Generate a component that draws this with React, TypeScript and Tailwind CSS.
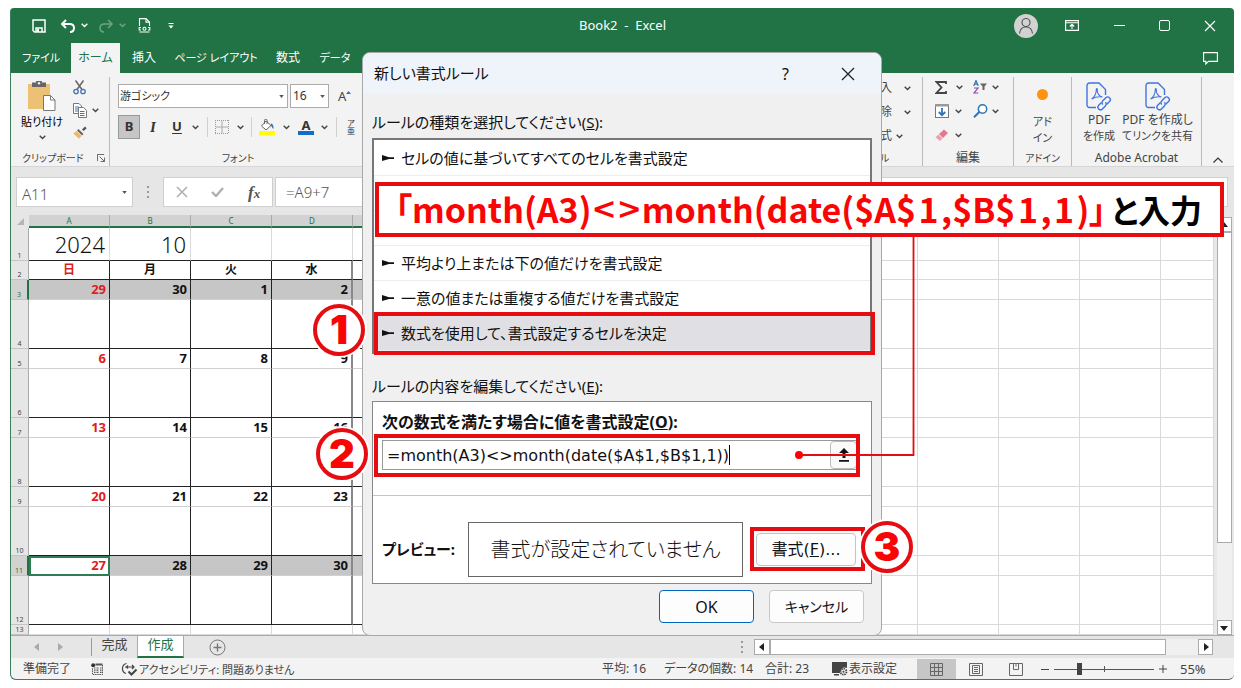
import React from "react";

const Chevron = ({ className = "text-[#444]" }: { className?: string }) => (
  <svg viewBox="0 0 7 5" className={`h-[5px] w-[7px] shrink-0 ${className}`} fill="none" stroke="currentColor" strokeWidth="1.4">
    <path d="M0.7 0.8 L3.5 3.6 L6.3 0.8" />
  </svg>
);

const Caret = ({ className = "" }: { className?: string }) => (
  <svg viewBox="0 0 6 4" className={`pointer-events-none h-[3px] w-[5px] ${className}`} fill="#555">
    <path d="M0 0h6L3 4z" />
  </svg>
);

const SaveIcon = () => (
  <svg viewBox="0 0 14 14" className="h-[14px] w-[14px]" fill="none" stroke="#fff" strokeWidth="1.5">
    <path d="M1 1h12v12H2.5L1 11.5z" />
    <path d="M4 13V9h6v4" />
    <path d="M5 10h2v3H5z" fill="#fff" stroke="none" />
  </svg>
);

const UndoIcon = ({ flip = false }: { flip?: boolean }) => (
  <svg viewBox="0 0 16 14" className={flip ? "h-[14px] w-4 -scale-x-100 opacity-35" : "h-[14px] w-4"} fill="none" stroke="#fff" strokeWidth={flip ? 1.5 : 2}>
    <path d="M6 1 L2 5 L6 9" />
    <path d="M2 5h7.5c2.6 0 4.5 1.6 4.5 4s-1.5 4-4 4" />
  </svg>
);

const PrintPreviewIcon = () => (
  <svg viewBox="0 0 13 15" className="h-[15px] w-[13px]" fill="none" stroke="#fff" strokeWidth="1.1">
    <path d="M1.5 8V0.600h6.500l3.500 3.500V8" />
    <path d="M8 0.600v3.500h3.500" />
    <path d="M3 9.500H1.200v2.500H3M10 9.500h1.800v2.500H10M1.500 14h10" />
    <circle cx="6.5" cy="10.700" r="1.500" />
  </svg>
);

const PasteIcon = () => (
  <svg viewBox="0 0 28 30" className="h-[30px] w-7">
    <rect x="0" y="3" width="22" height="25" fill="#edc175" />
    <path d="M4 1.5h4a3 3 0 0 1 6 0h4V6H4z" fill="#666" />
    <circle cx="11" cy="2.3" r="1.2" fill="#eee" />
    <path d="M15.5 14.5h7l4.5 4.5v10.5H15.5z" fill="#fff" stroke="#777" />
    <path d="M22.5 14.5V19H27" fill="none" stroke="#777" />
  </svg>
);

const CutIcon = () => (
  <svg viewBox="0 0 13 15" className="h-[15px] w-[13px]" fill="none" strokeWidth="1.3">
    <path d="M2.5 0.5 L9 9.5 M10.5 0.5 L4 9.5" stroke="#666" strokeWidth="1.5" />
    <circle cx="3" cy="11.5" r="2.2" stroke="#3b76b5" />
    <circle cx="10" cy="11.5" r="2.2" stroke="#3b76b5" />
  </svg>
);

const CopyIcon = () => (
  <svg viewBox="0 0 14 15" className="h-[15px] w-[14px]" fill="#fff" stroke="#777">
    <path d="M0.5 0.5h5.5l2.5 2.5v7.500h-8z" />
    <path d="M2 4h4M2 6h4M2 8h3" stroke="#3b76b5" />
    <path d="M5.500 4.500h5l3 3v7h-8z" />
    <path d="M7 8.500h4.500M7 10.500h4.500M7 12.500h4.500" stroke="#3b76b5" />
  </svg>
);

const BrushIcon = () => (
  <svg viewBox="0 0 14 13" className="h-[13px] w-[14px]">
    <path d="M9 3.500 L12 0.500 L13.700 2.200 L10.600 5z" fill="#555" />
    <path d="M5.500 3 L10.500 8 L9 9.500 L4 4.500z" fill="#666" />
    <path d="M3.500 5 L8.500 10 L6 12.700 L0.300 7.500z" fill="#edb866" />
  </svg>
);

const BordersIcon = () => (
  <svg viewBox="0 0 14 14" className="h-[14px] w-[14px]" fill="none" stroke="#999">
    <path d="M0.500 0v14M13.500 0v14M0 0.500h14M0 13.500h14" strokeDasharray="1 1" />
    <path d="M7 1v12M1 7h12" stroke="#aaa" />
  </svg>
);

const FillIcon = () => (
  <svg viewBox="0 0 16 17" className="h-[17px] w-4">
    <rect y="12" width="16" height="4.500" fill="#ffff00" />
    <path d="M7 2 L12 6.500 L7 11 L2.500 7z" fill="#fff" stroke="#666" />
    <path d="M5.500 5V1.500a1.300 1.300 0 0 1 2.600 0V5" fill="none" stroke="#666" />
    <path d="M12 4.500c2 .5 2.800 2 2.500 5.500-1-.5-1.500-2-2.500-3z" fill="#3b76b5" />
  </svg>
);

const AvatarIcon = () => (
  <svg viewBox="0 0 24 24" className="h-6 w-6">
    <circle cx="12" cy="12" r="12" fill="#d2d2d2" />
    <g fill="none" stroke="#555" strokeWidth="1.200">
      <circle cx="12" cy="8.500" r="4" />
      <path d="M5.500 19.500c.5-4.500 3-6.500 6.500-6.500s6 2 6.500 6.500" />
    </g>
  </svg>
);

const RibbonDisplayIcon = () => (
  <svg viewBox="0 0 14 11" className="h-[11px] w-[14px]" fill="none" stroke="#fff" strokeWidth="1.100">
    <path d="M0.600 0.600h12.800v9.800H0.600z M0.600 2.700h12.800" />
    <path d="M7 9V4.500M4.800 6.500 L7 4.300 L9.200 6.500" />
  </svg>
);

const CommentIcon = () => (
  <svg viewBox="0 0 15 13" className="h-[13px] w-[15px]" fill="none" stroke="#fff" strokeWidth="1.100">
    <path d="M0.600 0.600h13.800v8.800H5.500L2.800 12V9.400H0.600z" />
  </svg>
);

const SigmaIcon = () => (
  <svg viewBox="0 0 12 13" className="h-[13px] w-3" fill="none" stroke="#444" strokeWidth="1.800">
    <path d="M11 3V1H1.500L6.500 6.500L1.500 12H11V10" />
  </svg>
);

const FillDownIcon = () => (
  <svg viewBox="0 0 14 14" className="h-[14px] w-[14px]">
    <rect x="0.500" y="0.500" width="13" height="13" fill="#fff" stroke="#777" />
    <rect x="0" y="0" width="14" height="2.500" fill="#999" />
    <path d="M7 4v7M3.800 8 L7 11.200 L10.200 8" fill="none" stroke="#2e75b6" strokeWidth="1.800" />
  </svg>
);

const EraserIcon = () => (
  <svg viewBox="0 0 14 12" className="h-3 w-[14px]">
    <path d="M9 0.500 L13 4 L8 9 L4 5z" fill="#e4788f" />
    <path d="M3.500 5.500 L7.500 9.500 L5 12 L0.500 8.300z" fill="#ee9fb0" />
  </svg>
);

const SortIcon = () => (
  <svg viewBox="0 0 14 14" className="h-[14px] w-[14px]" fill="none">
    <path d="M0.700 6 L3 0.500 L5.300 6M1.500 4.200h3" stroke="#2e75b6" strokeWidth="1.200" />
    <path d="M1 8h4L1 13h4.300" stroke="#8e44ad" strokeWidth="1.200" />
    <path d="M7 3.500h7L11.500 6.500V10h-2V6.500z" fill="#666" />
  </svg>
);

const FindIcon = () => (
  <svg viewBox="0 0 15 14" className="h-[14px] w-[15px]" fill="none" stroke="#2e75b6">
    <circle cx="9.500" cy="5" r="4.200" strokeWidth="1.500" fill="#fff" />
    <path d="M6.300 8 L1 13.200" strokeWidth="2" />
  </svg>
);

const PdfIcon = () => (
  <svg viewBox="0 0 26 29" className="h-[29px] w-[26px]" fill="none" stroke="#3f74e0" strokeWidth="1.400">
    <path d="M10 25.500H3.500a2.500 2.500 0 0 1-2.500-2.500V3.500A2.500 2.500 0 0 1 3.500 1H13l6.500 6.500V13" />
    <path d="M5.500 17c3-1.500 5-6 4.800-9.500-.1-1.300 1.200-1.200 1 0-.5 3.500 2 7 5.200 7.500-3-.6-7-.2-11 2z" strokeWidth="1.100" />
    <path d="M15.500 20.500l-2.800 2.700a2.600 2.600 0 0 0 3.700 3.700l3-3a2.600 2.600 0 0 0 0-3.700" />
    <path d="M20.500 22.500l3-3a2.600 2.600 0 0 0-3.700-3.700l-3 3a2.600 2.600 0 0 0 0 3.700" />
  </svg>
);

const LauncherIcon = () => (
  <svg viewBox="0 0 9 9" className="h-2 w-2" fill="none" stroke="#555">
    <path d="M0.500 8V0.500H8" />
    <path d="M3 3l5 5M8.500 4v4.500H4" />
  </svg>
);

const AccessibilityIcon = () => (
  <svg viewBox="0 0 17 14" className="h-[14px] w-[17px]" fill="none" stroke="#444" strokeWidth="1.200">
    <path d="M5.500 1.500A5.200 5.200 0 0 0 5 11.500" />
    <path d="M4 5h9M11 3l2 2-2 2M7 3.500l-1.500 1.500L7 6.500" />
    <path d="M7.500 9.500l3 3 5-5" strokeWidth="2" />
  </svg>
);

const MacroIcon = () => (
  <svg viewBox="0 0 12 12" className="h-3 w-3" fill="none" stroke="#555">
    <path d="M4.500 1.500h7" strokeWidth="2" />
    <path d="M11.500 2v9.500H1.500V5" strokeDasharray="1.500 0.700" />
    <path d="M3 5h1.500M5.500 5h2M9 5h1.500M3 7.200h1.500M5.500 7.200h2M9 7.200h1.500M3 9.400h1.500M5.500 9.400h2M9 9.400h1.500" strokeWidth="1.200" />
    <circle cx="2.200" cy="2.200" r="2" fill="#333" stroke="none" />
  </svg>
);

const DisplayIcon = () => (
  <svg viewBox="0 0 16 14" className="h-[14px] w-4">
    <path d="M0 0h15v6a5 5 0 0 0-7 5H0z" fill="#444" />
    <path d="M2 12h5v1.500H2z" fill="#444" />
    <circle cx="11.500" cy="9.700" r="3" fill="#f3f3f3" stroke="#444" strokeWidth="1.800" strokeDasharray="1.500 0.800" />
    <circle cx="11.500" cy="9.700" r="1" fill="#444" />
  </svg>
);

const Tri = ({ dir }: { dir: "up" | "down" | "left" | "right" }) => {
  const d = {
    up: "M0 6L4 1L8 6z",
    down: "M0 2L4 7L8 2z",
    left: "M6 0L1 4L6 8z",
    right: "M2 0L7 4L2 8z",
  }[dir];
  return (
    <svg viewBox="0 0 8 8" className="h-2 w-2" fill="#222">
      <path d={d} />
    </svg>
  );
};

const ArrowBullet = () => (
  <svg viewBox="0 0 12 6" className="h-[6px] w-3 shrink-0">
    <path d="M0 0L7 2.300H12V3.900H7L0 6z" fill="#111" />
  </svg>
);

const Split = ({ className = "h-5" }: { className?: string }) => <span className={`w-px bg-[#d0d0d0] ${className}`} />;

/* ---------- title bar and ribbon ---------- */

const TitleBar = () => (
  <header className="grid h-[35px] grid-cols-[1fr_auto_1fr] items-center text-white">
    <div className="flex items-center pl-[21px]">
      <button aria-label="上書き保存" className="w-[28px]"><SaveIcon /></button>
      <button aria-label="元に戻す" className="w-[21px]"><UndoIcon /></button>
      <Chevron className="text-white" />
      <button aria-label="やり直し" className="ml-[10px] w-[21px]"><UndoIcon flip /></button>
      <Chevron className="text-white opacity-35" />
      <button aria-label="印刷プレビュー" className="ml-3 w-[30px]"><PrintPreviewIcon /></button>
      <svg viewBox="0 0 6 6" className="h-[6px] w-[6px]" fill="#fff"><path d="M0.500 0h5v1h-5zM0.500 2.500h5L3 5.500z" /></svg>
    </div>
    <h1 className="pt-px text-[13px]">Book2&nbsp; -&nbsp; Excel</h1>
    <div className="flex items-center justify-end pr-[18px]">
      <button aria-label="アカウント"><AvatarIcon /></button>
      <button aria-label="リボンの表示オプション" className="ml-[27px] w-[49px]"><RibbonDisplayIcon /></button>
      <button aria-label="最小化" className="w-[45px]"><span className="block h-px w-[11px] bg-white" /></button>
      <button aria-label="最大化" className="w-[45px]"><span className="block h-[11px] w-[11px] rounded-[2px] border border-white" /></button>
      <button aria-label="閉じる">
        <svg viewBox="0 0 12 12" className="h-3 w-3" stroke="#fff" strokeWidth="1.200"><path d="M1 1l10 10M11 1L1 11" /></svg>
      </button>
    </div>
  </header>
);

const TabBar = () => (
  <nav className="flex h-[30px] items-stretch text-[11px] text-white">
    <button className="w-[60px]">ファイル</button>
    <button className="w-[49px] bg-[#f3f3f3] text-xs text-[#217346]">ホーム</button>
    <button className="w-[48px] text-xs">挿入</button>
    <button className="w-[96px]">ページ レイアウト</button>
    <button className="w-[48px] text-xs">数式</button>
    <button className="w-[46px]">データ</button>
    <button aria-label="コメント" className="ml-auto mr-4"><CommentIcon /></button>
  </nav>
);

const GroupLabel = ({ children, wide = false }: { children: React.ReactNode; wide?: boolean }) => (
  <div className={`flex h-4 items-center justify-center leading-none text-[#444] ${wide ? "text-xs" : "text-[10px]"}`}>{children}</div>
);

const ClipboardGroup = () => (
  <section className="flex w-[99px] flex-col border-r border-[#bbb]">
    <div className="flex flex-1">
      <button className="flex w-[62px] flex-col items-center pt-[4px] text-[11px] leading-none">
        <PasteIcon />
        <span className="mt-[5px]">貼り付け</span>
        <span className="mt-2"><Chevron /></span>
      </button>
      <div className="flex flex-col gap-[8px] pt-[3px]">
        <button aria-label="切り取り"><CutIcon /></button>
        <button aria-label="コピー" className="flex items-center gap-[5px]"><CopyIcon /><Chevron /></button>
        <button aria-label="書式のコピー"><BrushIcon /></button>
      </div>
    </div>
    <div className="flex h-4 items-center justify-between pl-[11px] pr-1 text-[10px] leading-none text-[#444]">
      クリップボード
      <LauncherIcon />
    </div>
  </section>
);

const cell = "flex h-6 items-center justify-center";

const FontGroup = () => (
  <section className="flex w-[256px] flex-col pl-2">
    <div className="flex items-center gap-[2px] pt-[7px]">
      <label className="relative flex items-center">
        <select aria-label="フォント名" className="h-6 w-[170px] appearance-none border border-[#ababab] bg-white pl-px text-[11px] text-[#333]">
          <option>游ゴシック</option>
        </select>
        <Caret className="absolute right-1" />
      </label>
      <label className="relative flex items-center">
        <select aria-label="フォント サイズ" className="h-6 w-[39px] appearance-none border border-[#ababab] bg-white pl-[2px] text-xs text-[#333]">
          <option>16</option>
        </select>
        <Caret className="absolute right-1" />
      </label>
      <button aria-label="フォント サイズの拡大" className="flex pl-[7px] text-[13px] leading-none text-[#444]">
        A<svg viewBox="0 0 5 3" className="mt-px h-[3px] w-[5px]" fill="#2e75b6"><path d="M0 3L2.500 0L5 3z" /></svg>
      </button>
    </div>
    <div className="mt-[7px] flex items-center text-[#333]">
      <button className={`${cell} w-[22px] border border-[#999] bg-[#c6c6c6] text-[13px] font-bold`}>B</button>
      <button className={`${cell} w-[26px] font-['Liberation_Serif',serif] text-[15px] font-bold italic`}>I</button>
      <button className={`${cell} w-[22px] text-[13px] font-bold underline underline-offset-2`}>U</button>
      <span className={`${cell} w-[14px]`}><Chevron /></span>
      <span className={`${cell} w-[10px]`}><Split /></span>
      <button aria-label="罫線" className={`${cell} w-[20px]`}><BordersIcon /></button>
      <span className={`${cell} w-[16px]`}><Chevron /></span>
      <span className={`${cell} w-[6px]`}><Split /></span>
      <button aria-label="塗りつぶしの色" className={`${cell} w-[26px]`}><FillIcon /></button>
      <span className={`${cell} w-[12px]`}><Chevron /></span>
      <button aria-label="フォントの色" className={`${cell} w-[28px]`}>
        <span className="flex w-4 flex-col items-center border-b-4 border-[#0f6fc6] text-[13px] font-bold leading-[12px]">A</span>
      </button>
      <span className={`${cell} w-[8px]`}><Chevron /></span>
      <span className={`${cell} w-[16px]`}><Split /></span>
      <button className="flex w-[14px] flex-col items-center text-[8px] leading-[8px]"><span>ア</span><span>亜</span></button>
    </div>
    <div className="mt-auto pr-2"><GroupLabel>フォント</GroupLabel></div>
  </section>
);

const CellsGroup = () => (
  <section className="flex w-[43px] flex-col border-r border-[#bbb]">
    <div className="flex flex-1 flex-col gap-[6px] pt-[2px] text-xs leading-[18px] text-[#444]">
      <button className="flex items-center gap-3">入<Chevron /></button>
      <button className="flex items-center gap-3">除<Chevron /></button>
      <button className="flex items-center gap-1">式<Chevron /></button>
    </div>
    <div className="flex h-4 items-center text-[10px] leading-none text-[#444]">ル</div>
  </section>
);

const EditGroup = () => (
  <section className="flex w-[91px] flex-col border-r border-[#bbb]">
    <div className="grid flex-1 grid-cols-[38px_1fr] content-start gap-y-2 pt-[2px] pl-3">
      <button aria-label="合計" className="flex h-4 items-center gap-[9px]"><SigmaIcon /><Chevron /></button>
      <button aria-label="並べ替えとフィルター" className="flex h-4 items-center gap-[5px]"><SortIcon /><Chevron /></button>
      <button aria-label="フィル" className="flex h-4 items-center gap-[6px]"><FillDownIcon /><Chevron /></button>
      <button aria-label="検索と選択" className="flex h-4 items-center gap-1"><FindIcon /><Chevron /></button>
      <button aria-label="クリア" className="flex h-4 items-center gap-[6px]"><EraserIcon /><Chevron /></button>
    </div>
    <GroupLabel wide>編集</GroupLabel>
  </section>
);

const AddinGroup = () => (
  <section className="flex w-[58px] flex-col border-r border-[#bbb]">
    <button className="flex flex-1 flex-col items-center pt-[12px] text-[11px] leading-4 text-[#444]">
      <span className="mb-[14px] h-[11px] w-[11px] rounded-full bg-[#ff930f]" />
      <span>アド</span>
      <span>イン</span>
    </button>
    <GroupLabel>アドイン</GroupLabel>
  </section>
);

const AcrobatGroup = () => (
  <section className="flex w-[130px] flex-col border-r border-[#bbb]">
    <div className="flex flex-1 pt-[5px] pr-2 text-xs leading-4 text-[#444]">
      <button className="flex w-[56px] flex-col items-center pl-1">
        <PdfIcon />
        <span className="mt-px">PDF</span>
        <span className="text-[11px] whitespace-nowrap">を作成</span>
      </button>
      <button className="flex flex-1 flex-col items-center">
        <PdfIcon />
        <span className="mt-px whitespace-nowrap">PDF を作成し</span>
        <span className="text-[11px] whitespace-nowrap">てリンクを共有</span>
      </button>
    </div>
    <GroupLabel wide>Adobe Acrobat</GroupLabel>
  </section>
);

const Ribbon = () => (
  <div className="flex h-[93px] items-stretch bg-[#f3f3f3] pt-1">
    <ClipboardGroup />
    <FontGroup />
    <div className="ml-auto flex">
      <CellsGroup />
      <EditGroup />
      <AddinGroup />
      <AcrobatGroup />
    </div>
    <button aria-label="リボンを折りたたむ" className="flex w-8 items-end justify-center pb-[3px]">
      <svg viewBox="0 0 10 6" className="h-[6px] w-[10px]" fill="none" stroke="#333" strokeWidth="1.200"><path d="M0.500 5.500L5 1l4.500 4.500" /></svg>
    </button>
  </div>
);

const FormulaBar = () => (
  <div className="flex h-[49px] items-start border-t border-[#d6d6d6] pt-[10px] pr-[6px] pl-[5px] text-[#555]">
    <label className="relative flex items-center">
      <input aria-label="名前ボックス" defaultValue="A11" className="h-[30px] w-[117px] border border-[#cfcfcf] bg-white pt-[3px] pl-[5px] text-[15px] font-light" />
      <Caret className="absolute right-[6px]" />
    </label>
    <span className="flex h-[30px] w-[30px] flex-col items-center justify-center gap-[3px]">
      <i className="h-[2px] w-[2px] bg-[#999]" />
      <i className="h-[2px] w-[2px] bg-[#999]" />
      <i className="h-[2px] w-[2px] bg-[#999]" />
    </span>
    <div className="flex h-[30px] w-[110px] items-center justify-around border border-[#cfcfcf] bg-white">
      <button aria-label="キャンセル"><svg viewBox="0 0 12 12" className="h-3 w-3" stroke="#b0b0b0" strokeWidth="1.600"><path d="M1 1l10 10M11 1L1 11" /></svg></button>
      <button aria-label="入力"><svg viewBox="0 0 13 10" className="h-[10px] w-[13px]" fill="none" stroke="#b0b0b0" strokeWidth="2.400"><path d="M1 5l4 4L12 1" /></svg></button>
      <button aria-label="関数の挿入" className="font-['Liberation_Serif',serif] text-[17px] leading-none font-bold text-[#555] italic">f<span className="text-[13px]">x</span></button>
    </div>
    <input aria-label="数式バー" defaultValue="=A9+7" className="ml-[2px] h-[30px] min-w-0 flex-1 border border-[#cfcfcf] bg-white pl-[10px] text-[15px] font-light" />
  </div>
);

/* ---------- worksheet ---------- */

type Row = { n: number; height: string; kind: "title" | "week" | "date" | "blank" | "plain"; values?: string[]; selected?: boolean };

const rows: Row[] = [
  { n: 1, height: "h-[33px]", kind: "title", values: ["2024", "10"] },
  { n: 2, height: "h-[19px]", kind: "week", values: ["日", "月", "火", "水"] },
  { n: 3, height: "h-5", kind: "date", values: ["29", "30", "1", "2"], selected: true },
  { n: 4, height: "h-[49px]", kind: "blank" },
  { n: 5, height: "h-5", kind: "date", values: ["6", "7", "8", "9"] },
  { n: 6, height: "h-[49px]", kind: "blank" },
  { n: 7, height: "h-5", kind: "date", values: ["13", "14", "15", "16"] },
  { n: 8, height: "h-[49px]", kind: "blank" },
  { n: 9, height: "h-5", kind: "date", values: ["20", "21", "22", "23"] },
  { n: 10, height: "h-[49px]", kind: "blank" },
  { n: 11, height: "h-5", kind: "date", values: ["27", "28", "29", "30"], selected: true },
  { n: 12, height: "h-[49px]", kind: "blank" },
  { n: 13, height: "h-[10px]", kind: "plain" },
];

const letters = ["A", "B", "C", "D", "E", "F", "G", "H", "I", "J", "K", "L", "M", "N", "O"];

const cellClass = (row: Row, col: number) => {
  if (col > 6) return "border-r border-b border-[#d9d9d9]";
  let c = "border-b border-r ";
  if (row.kind === "title") c += "border-b-[#222] border-r-[#d9d9d9] pr-1 text-right text-[22px] font-light";
  else if (row.kind === "plain") c += "border-[#d9d9d9]";
  else {
    c += col === 3 ? "border-r-2 border-r-[#888] " : "border-r-[#222] ";
    if (row.kind === "week") c += "border-b-[#222] text-center text-xs font-bold";
    if (row.kind === "date") c += "border-b-[#d0d0d0] pr-[3px] text-right text-[13px] font-bold";
    if (row.kind === "blank") c += "border-b-[#222]";
  }
  if (col === 0 && row.kind !== "title") c += " text-[#e01b22]";
  if (row.n === 11 && col === 0) c += " bg-white outline-2 -outline-offset-2 outline-[#2f7d52]";
  else if (row.selected) c += " bg-[#c6c6c6]";
  return c;
};

const Worksheet = () => (
  <div className="flex">
    <table className="min-w-0 flex-1 table-fixed border-separate border-spacing-0 bg-white leading-none text-[#111]">
      <colgroup>
        <col className="w-[18px]" />
        {letters.map((l, i) => (
          <col key={l} className={i === 14 ? "" : i === 9 || i === 10 ? "w-[80px]" : "w-[81px]"} />
        ))}
      </colgroup>
      <thead>
        <tr className="h-[13px] text-[8px]">
          <th className="bg-[#e6e6e6] p-0">
            <svg viewBox="0 0 7 7" className="mx-auto h-[7px] w-[7px]" fill="#b5b5b5"><path d="M7 0v7H0z" /></svg>
          </th>
          {letters.map((l, i) => (
            <th
              key={l}
              className={
                i < 7
                  ? "border-r border-b-2 border-r-[#aaa] border-b-[#217346] bg-[#d2d2d2] p-0 font-normal text-[#217346]"
                  : "border-r border-b-2 border-[#bbb] bg-[#e6e6e6] p-0 font-normal text-[#555]"
              }
            >
              {i < 4 ? l : ""}
            </th>
          ))}
        </tr>
      </thead>
      <tbody>
        {rows.map((row) => (
          <tr key={row.n} className={row.height}>
            <th
              className={`border-r border-b border-b-[#c4c4c4] p-0 pb-px text-center align-bottom text-[7px] font-normal ${
                row.selected ? "border-r-2 border-r-[#217346] bg-[#d2d2d2] text-[#217346]" : "border-r-[#aaa] bg-[#e6e6e6] text-[#444]"
              }`}
            >
              {row.n}
            </th>
            {letters.map((l, i) => (
              <td key={l} className={`p-0 ${cellClass(row, i)}`}>{row.values?.[i]}</td>
            ))}
          </tr>
        ))}
      </tbody>
    </table>
    <div className="flex w-5 flex-col items-center bg-[#e8e8e8] pt-[2px]">
      <button aria-label="上へスクロール" className="flex h-[15px] w-[15px] items-center justify-center border border-[#ababab] bg-white"><Tri dir="up" /></button>
      <div className="flex w-[15px] flex-1 flex-col bg-[#f0f0f0]"><div className="h-[311px] border border-[#ababab] bg-white" /></div>
      <button aria-label="下へスクロール" className="flex h-[15px] w-[15px] items-center justify-center border border-[#ababab] bg-white"><Tri dir="down" /></button>
    </div>
  </div>
);

const SheetTabs = () => (
  <div className="flex h-[23px] items-stretch border-t border-[#ababab] text-[13px] leading-none text-[#444]">
    <div className="flex w-[80px] items-center gap-[15px] pl-[22px] opacity-30"><Tri dir="left" /><Tri dir="right" /></div>
    <button className="my-[2px] w-[46px] border-l border-[#999] pb-[5px]">完成</button>
    <button className="w-[47px] border-x border-b-2 border-x-[#aaa] border-b-[#217346] bg-white pb-1 text-[#217346]">作成</button>
    <button aria-label="新しいシート" className="ml-[25px] self-center">
      <svg viewBox="0 0 17 17" className="h-[17px] w-[17px]" fill="none" stroke="#777"><circle cx="8.500" cy="8.500" r="7.500" /><path d="M8.500 4.500v8M4.500 8.500h8" strokeWidth="1.400" /></svg>
    </button>
    <div className="ml-auto flex w-[493px] items-center pr-[21px]">
      <span className="flex w-[13px] flex-col gap-[3px]">
        <i className="h-[2px] w-[2px] bg-[#999]" />
        <i className="h-[2px] w-[2px] bg-[#999]" />
        <i className="h-[2px] w-[2px] bg-[#999]" />
      </span>
      <button aria-label="左へスクロール" className="flex h-4 w-4 items-center justify-center border border-[#ababab] bg-white"><Tri dir="left" /></button>
      <div className="flex h-4 flex-1 bg-[#f0f0f0] pr-[32px]"><div className="flex-1 border border-[#ababab] bg-white" /></div>
      <button aria-label="右へスクロール" className="flex h-4 w-[15px] items-center justify-center border border-[#ababab] bg-white"><Tri dir="right" /></button>
    </div>
  </div>
);

const StatusBar = () => (
  <footer className="flex h-[21px] items-center rounded-b-md bg-[#f3f3f3] pt-px text-xs leading-none whitespace-nowrap text-[#444]">
    <span className="w-[80px] pl-3">準備完了</span>
    <span className="w-[30px]"><MacroIcon /></span>
    <span className="flex items-center gap-px text-[11px]"><AccessibilityIcon />アクセシビリティ: 問題ありません</span>
    <span className="ml-auto w-[62px]">平均: 16</span>
    <span className="w-[101px]">データの個数: 14</span>
    <span className="w-[67px]">合計: 23</span>
    <span className="flex w-[85px] items-center gap-px"><DisplayIcon />表示設定</span>
    <button aria-label="標準" className="flex h-full w-[39px] items-center justify-center bg-[#c6c6c6]">
      <svg viewBox="0 0 13 13" className="h-[13px] w-[13px]" fill="none" stroke="#666"><path d="M0.500 0.500h12v12h-12zM4.500 0v13M8.500 0v13M0 4.500h13M0 8.500h13" /></svg>
    </button>
    <button aria-label="ページ レイアウト" className="flex w-[40px] justify-center">
      <svg viewBox="0 0 14 13" className="h-[13px] w-[14px]" fill="none" stroke="#666"><path d="M0.500 0.500h13v12h-13zM3.500 2.500h7v8h-7zM5 4.500h4M5 6.500h4M5 8.500h4" /></svg>
    </button>
    <button aria-label="改ページ プレビュー" className="flex w-[40px] justify-center">
      <svg viewBox="0 0 14 13" className="h-[13px] w-[14px]" fill="none" stroke="#666"><path d="M0.500 0.500h13v12h-13zM4.500 0.500v6h5v-6M7 0.500v3" /></svg>
    </button>
    <button aria-label="縮小" className="ml-[5px] h-px w-2 bg-[#444]" />
    <label className="relative mx-[5px] flex w-[100px] items-center">
      <input
        type="range"
        aria-label="ズーム"
        defaultValue={24}
        className="h-3 w-full appearance-none bg-transparent [&::-webkit-slider-runnable-track]:h-px [&::-webkit-slider-runnable-track]:bg-[#555] [&::-webkit-slider-thumb]:-mt-[6px] [&::-webkit-slider-thumb]:h-3 [&::-webkit-slider-thumb]:w-[5px] [&::-webkit-slider-thumb]:appearance-none [&::-webkit-slider-thumb]:bg-[#444]"
      />
      <i className="absolute left-1/2 h-[6px] w-px bg-[#555]" />
    </label>
    <button aria-label="拡大" className="w-2"><svg viewBox="0 0 8 8" className="h-2 w-2" stroke="#444"><path d="M4 0v8M0 4h8" /></svg></button>
    <span className="w-[67px] pl-[13px] text-[13px]">55%</span>
  </footer>
);

/* ---------- dialog ---------- */

const ruleTypes = [
  "セルの値に基づいてすべてのセルを書式設定",
  "",
  "",
  "平均より上または下の値だけを書式設定",
  "一意の値または重複する値だけを書式設定",
  "数式を使用して、書式設定するセルを決定",
];

const RuleDialog = () => (
  <div role="dialog" aria-label="新しい書式ルール" className="absolute top-[52px] left-[362px] w-[520px] overflow-hidden rounded-lg border border-[#a8a8a8] bg-[#f0f0f0] text-[#111]">
    <div className="flex h-[41px] items-center bg-[#eff3fa] pr-[26px] pl-[11px]">
      <h2 className="text-[15px]">新しい書式ルール</h2>
      <button aria-label="ヘルプ" className="ml-auto w-[59px] text-left text-base">?</button>
      <button aria-label="閉じる"><svg viewBox="0 0 14 14" className="h-[14px] w-[14px]" stroke="#222" strokeWidth="1.300"><path d="M1 1l12 12M13 1L1 13" /></svg></button>
    </div>
    <div className="px-[9px]">
      <p className="flex h-[44px] items-center pt-3 text-[15px]">ルールの種類を選択してください(<u>S</u>):</p>
      <ul className="border-2 border-[#777] bg-white py-px text-[15px] whitespace-nowrap">
        {ruleTypes.map((t, i) => (
          <li key={i} className={`flex h-[35px] items-center gap-[7px] border-b border-[#eee] pl-2 ${i === 5 ? "bg-[#e0e0e4]" : ""}`}>
            {t && <ArrowBullet />}
            {t}
          </li>
        ))}
      </ul>
      <p className="flex h-[47px] items-center pt-[17px] text-[15px]">ルールの内容を編集してください(<u>E</u>):</p>
      <div className="border border-[#888] bg-white">
        <div className="border-b border-[#c4c4c4] pr-[13px] pb-[25px] pl-[9px]">
          <label htmlFor="formula" className="flex h-[38px] items-center pt-[2px] text-base font-bold">次の数式を満たす場合に値を書式設定(<u>O</u>):</label>
          <div className="flex items-center border border-[#999]">
            <input id="formula" defaultValue="=month(A3)<>month(date($A$1,$B$1,1))" className="field-sizing-content h-[28px] pl-1 font-['DejaVu_Sans',sans-serif] text-base outline-none" />
            <span className="h-5 w-px bg-black" />
            <button aria-label="範囲の選択" className="ml-auto flex h-[28px] w-[27px] items-center justify-center rounded-sm border border-[#bbb] bg-[#fafafa]">
              <svg viewBox="0 0 12 14" className="h-[14px] w-3" fill="#111"><path d="M6 0l5 5H7.500v5h-3V5H1zM1 12h10v1.700H1z" /></svg>
            </button>
          </div>
        </div>
        <div className="flex items-center pt-[26px] pr-[15px] pb-[6px] pl-[9px]">
          <span className="w-[86px] text-[15px] font-bold">プレビュー:</span>
          <div className="flex h-[55px] w-[275px] items-center justify-center border border-[#666] text-[20px] font-light">書式が設定されていません</div>
          <button className="ml-auto h-[33px] w-[100px] rounded-sm border border-[#c4c4c4] bg-[#fdfdfd] font-['DejaVu_Sans','Noto_Sans_CJK_JP',sans-serif] text-base">書式(<u>F</u>)...</button>
        </div>
      </div>
      <div className="flex justify-end gap-[15px] pt-[6px] pr-2 pb-3 text-base">
        <button className="h-[33px] w-[95px] rounded-sm border border-[#0067c0] bg-[#fdfdfd]">OK</button>
        <button className="h-[33px] w-[95px] rounded-sm border border-[#c8c8c8] bg-[#fdfdfd] text-sm">キャンセル</button>
      </div>
    </div>
  </div>
);

/* ---------- annotations ---------- */

const badge =
  "absolute flex h-[52px] w-[52px] items-center justify-center rounded-full border-4 border-[#e60d12] bg-white font-['Inter',sans-serif] text-[40px] leading-none font-black text-[#fa0505] ring-2 ring-white";

const One = () => <span className="inline-block w-[25px] text-center">1</span>;

const Annotations = () => (
  <>
    <div className="absolute top-[312px] left-[374px] h-[43px] w-[501px] border-4 border-[#e60d12]" />
    <div className="absolute top-[434px] left-[374px] h-[43px] w-[486px] border-4 border-[#e60d12]" />
    <div className="absolute top-[527px] left-[750px] h-[44px] w-[115px] border-4 border-[#e60d12]" />
    <svg viewBox="0 0 124 230" className="absolute top-[234px] left-[794px] h-[230px] w-[124px]" fill="none" stroke="#e60d12" strokeWidth="1.800">
      <path d="M5 221H119.500V0" />
      <circle cx="5" cy="221" r="4" fill="#f00" stroke="none" />
    </svg>
    <div className="absolute top-[182px] left-[375px] flex h-[55px] w-[849px] items-center justify-between border-4 border-[#e60d12] bg-white pr-[18px] pb-px pl-4 font-['Noto_Sans_CJK_JP',sans-serif] leading-none font-bold whitespace-nowrap">
      <span className="flex items-center text-[34px] text-[#fa0505]">
        「month(A3)
        <span className="font-['DejaVu_Sans',sans-serif] text-[30px]">&lt;&gt;</span>
        month(date($A$<One />,$B$<One />,<One />)」
      </span>
      <span className="text-[32px] text-black">と入力</span>
    </div>
    <div className={`${badge} top-[304px] left-[313px]`}>1</div>
    <div className={`${badge} top-[428px] left-[316px]`}>2</div>
    <div className={`${badge} top-[521px] left-[861px]`}>3</div>
  </>
);

export default function App() {
  return (
    <main className="relative bg-white pt-2 pr-[7px] pb-2 pl-[10px] font-['Noto_Sans','Noto_Sans_CJK_JP',sans-serif] [font-feature-settings:'palt']">
      <div className="overflow-hidden rounded-t rounded-b-md border-l border-b border-[#3c7d5b] bg-[#217346]">
        <TitleBar />
        <TabBar />
        <div className="bg-[#e6e6e6]">
          <Ribbon />
          <FormulaBar />
          <Worksheet />
          <SheetTabs />
          <StatusBar />
        </div>
      </div>
      <RuleDialog />
      <Annotations />
    </main>
  );
}
